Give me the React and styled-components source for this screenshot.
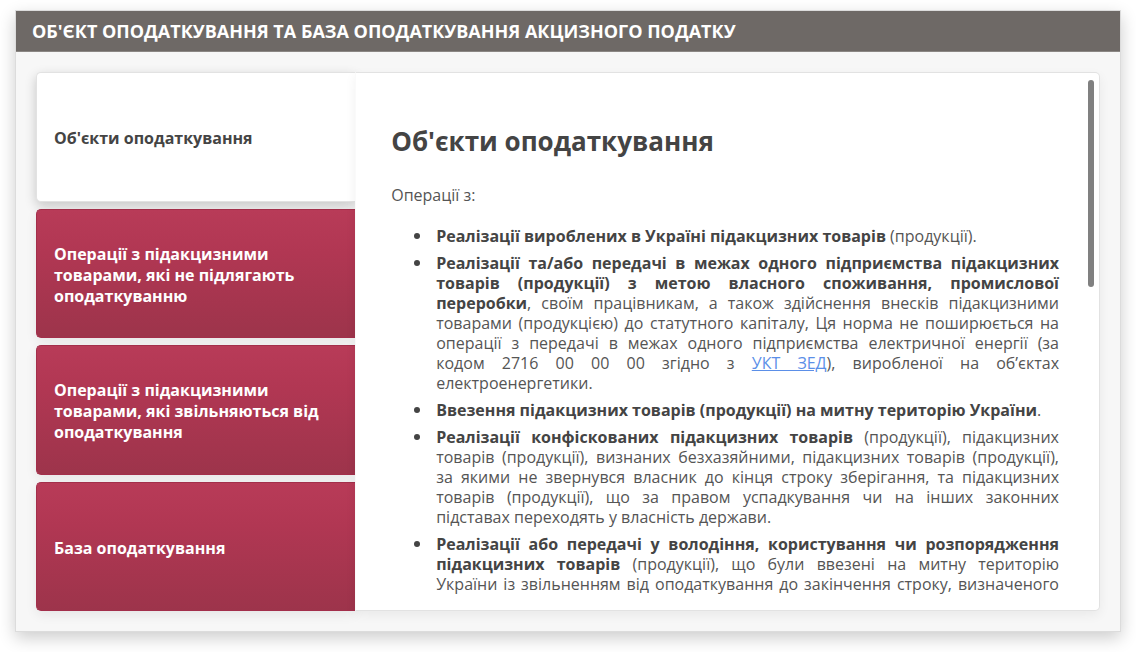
import React, { useState } from "react";
import styled, { createGlobalStyle } from "styled-components";

const GlobalStyle = createGlobalStyle`
  *, *::before, *::after { box-sizing: border-box; }
  body {
    margin: 0;
    background: #fff;
    color: #444;
    font-family: "Open Sans", "Noto Sans", sans-serif;
    font-size: 16px;
    line-height: 20px;
  }
`;

const Page = styled.main`
  padding: 10px 15px 20px;
`;

const Card = styled.section`
  background: #f7f7f7;
  border: 1px solid #dcdcdc;
  box-shadow: 0 6px 16px rgba(0, 0, 0, 0.2);
`;

const CardHeader = styled.header`
  background: #6e6966;
  border-bottom: 1px solid #8b8784;
  padding: 8px 16px;
`;

const CardTitle = styled.h1`
  margin: 0;
  color: #fff;
  font-size: 18px;
  line-height: 24px;
  font-weight: 700;
`;

const CardBody = styled.div`
  display: grid;
  grid-template-columns: 3fr 7fr;
  padding: 20px;
`;

const TabList = styled.div`
  display: grid;
  grid-auto-rows: 1fr;
  gap: 7px;
`;

const Tab = styled.button`
  display: flex;
  align-items: center;
  padding: 4px 17px 0;
  border: 1px solid ${(p) => (p.$active ? "#e2e2e2" : "#a32f4b")};
  border-right: 0;
  border-radius: 5px 0 0 5px;
  background: ${(p) =>
    p.$active ? "#fff" : "linear-gradient(#b83b58, #b13753 33%, #9d344b)"};
  color: ${(p) => (p.$active ? "#444" : "#fff")};
  box-shadow: 0 4px 12px rgba(0, 0, 0, ${(p) => (p.$active ? 0.2 : 0.07)});
  font-family: inherit;
  font-size: 16px;
  line-height: 21px;
  font-weight: 700;
  text-align: left;
  cursor: pointer;
`;

const Panel = styled.article`
  position: relative;
  padding: 52px 40px 16px 35px;
  background: #fff;
  border: 1px solid #e2e2e2;
  border-left-color: #fafafa;
  border-radius: 0 5px 5px 0;
  box-shadow: 0 4px 12px rgba(0, 0, 0, 0.06);
`;

const ScrollThumb = styled.span`
  position: absolute;
  top: 7px;
  right: 5px;
  width: 6px;
  height: 207px;
  border-radius: 3px;
  background: #808080;
`;

const PanelTitle = styled.h2`
  margin: 0 0 28px;
  font-size: 26px;
  line-height: 32px;
  font-weight: 700;
`;

const Lead = styled.p`
  margin: 0 0 21px;
  color: #555;
`;

const List = styled.ul`
  display: grid;
  gap: 7px;
  margin: 0;
  padding-left: 45px;
  list-style: none;
  text-align: justify;
`;

const Item = styled.li`
  position: relative;
  color: #555;
  text-align-last: ${(p) => (p.$continues ? "justify" : "auto")};

  &::before {
    content: "";
    position: absolute;
    top: 7px;
    left: -22px;
    width: 6px;
    height: 6px;
    border-radius: 50%;
    background: #444;
  }
`;

const Term = styled.strong`
  color: #444;
  font-weight: 700;
`;

const Link = styled.a`
  color: #5b8fe8;
`;

const tabs = [
  "Об'єкти оподаткування",
  "Операції з підакцизними товарами, які не підлягають оподаткуванню",
  "Операції з підакцизними товарами, які звільняються від оподаткування",
  "База оподаткування",
];

export default function App() {
  const [active, setActive] = useState(0);
  return (
    <>
      <GlobalStyle />
      <Page>
        <Card>
          <CardHeader>
            <CardTitle>ОБ'ЄКТ ОПОДАТКУВАННЯ ТА БАЗА ОПОДАТКУВАННЯ АКЦИЗНОГО ПОДАТКУ</CardTitle>
          </CardHeader>
          <CardBody>
            <TabList role="tablist">
              {tabs.map((label, i) => (
                <Tab
                  key={label}
                  type="button"
                  role="tab"
                  aria-selected={active === i}
                  $active={active === i}
                  onClick={() => setActive(i)}
                >
                  {label}
                </Tab>
              ))}
            </TabList>
            <Panel role="tabpanel">
              <ScrollThumb />
              <PanelTitle>Об'єкти оподаткування</PanelTitle>
              <Lead>Операції з:</Lead>
              <List>
                <Item>
                  <Term>Реалізації вироблених в Україні підакцизних товарів</Term> (продукції).
                </Item>
                <Item>
                  <Term>
                    Реалізації та/або передачі в межах одного підприємства підакцизних товарів
                    (продукції) з метою власного споживання, промислової переробки
                  </Term>
                  , своїм працівникам, а також здійснення внесків підакцизними товарами (продукцією)
                  до статутного капіталу, Ця норма не поширюється на операції з передачі в межах
                  одного підприємства електричної енергії (за кодом 2716 00 00 00 згідно з{" "}
                  <Link href="#uktzed">УКТ ЗЕД</Link>), виробленої на об’єктах електроенергетики.
                </Item>
                <Item>
                  <Term>Ввезення підакцизних товарів (продукції) на митну територію України</Term>.
                </Item>
                <Item>
                  <Term>Реалізації конфіскованих підакцизних товарів</Term> (продукції),
                  підакцизних товарів (продукції), визнаних безхазяйними, підакцизних товарів
                  (продукції), за якими не звернувся власник до кінця строку зберігання, та
                  підакцизних товарів (продукції), що за правом успадкування чи на інших законних
                  підставах переходять у власність держави.
                </Item>
                <Item $continues>
                  <Term>
                    Реалізації або передачі у володіння, користування чи розпорядження підакцизних
                    товарів
                  </Term>{" "}
                  (продукції), що були ввезені на митну територію України із звільненням від
                  оподаткування до закінчення строку, визначеного
                </Item>
              </List>
            </Panel>
          </CardBody>
        </Card>
      </Page>
    </>
  );
}
